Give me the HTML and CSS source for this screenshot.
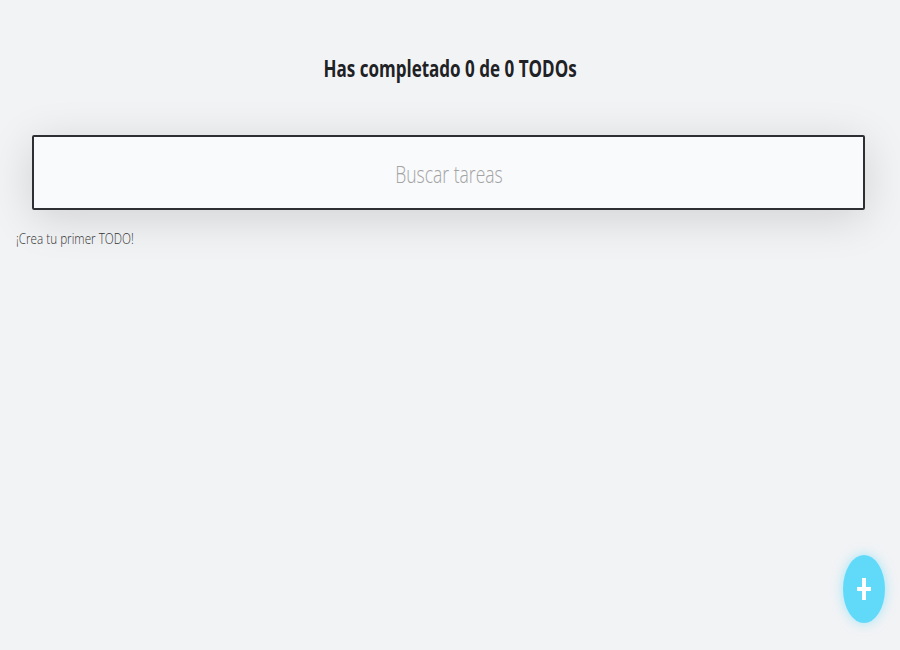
FILE: index.html
```html
<!DOCTYPE html>
<html lang="es">
<head>
<meta charset="utf-8">
<title>TODOs</title>
<link rel="stylesheet" href="styles.css">
</head>
<body>
<header class="counter">
  <h1 class="counter-title">Has completado 0 de 0 TODOs</h1>
</header>
<div class="search">
  <input class="search-input" type="text" placeholder="Buscar tareas">
  <span class="search-placeholder">Buscar tareas</span>
</div>
<p class="empty"><span class="empty-text">¡Crea tu primer TODO!</span></p>
<button class="create-btn" type="button" aria-label="Crear TODO">
  <svg class="create-icon" viewBox="0 0 14 22" width="14" height="22">
    <rect x="5" y="0" width="4" height="22" fill="#fff"/>
    <rect x="0" y="9" width="14" height="4" fill="#fff"/>
  </svg>
</button>
</body>
</html>
```
FILE: styles.css
```css
* { box-sizing: border-box; }
html, body { height: 100%; }
body {
  margin: 0;
  background: #f2f3f5;
  font-family: "Open Sans", "Noto Sans", sans-serif;
  color: #1f1f1f;
}
.counter {
  display: flex;
  justify-content: center;
  padding-top: 52px;
}
.counter-title {
  margin: 0;
  font-size: 23px;
  font-weight: 700;
  line-height: 32px;
  color: #202124;
  display: inline-block;
  transform: scaleX(0.74);
  white-space: nowrap;
}
.search {
  position: relative;
  margin: 51px 35px 0 32px;
  height: 75px;
  box-shadow: 0 8px 45px rgba(0,0,0,0.14);
}
.search-input {
  width: 100%;
  height: 100%;
  border: 2px solid #2e2f33;
  border-radius: 2px;
  background: #f9fafc;
  font: inherit;
  outline: none;
}
.search-input::placeholder { color: transparent; }
.search-placeholder {
  position: absolute;
  left: 50%;
  top: 50%;
  transform: translate(-50%, -50%) scaleX(0.73);
  font-family: "Open Sans", sans-serif;
  font-weight: 300;
  font-size: 24px;
  color: #a3a3a3;
  pointer-events: none;
  white-space: nowrap;
}
.empty {
  margin: 18px 0 0 16px;
  line-height: 20px;
}
.empty-text {
  display: inline-block;
  transform: scaleX(0.78);
  transform-origin: left center;
  font-size: 15px;
  font-weight: 300;
  color: #333;
  white-space: nowrap;
}
.create-btn {
  position: fixed;
  right: 15px;
  bottom: 27px;
  width: 42px;
  height: 68px;
  border: none;
  border-radius: 50%;
  background: #61dafa;
  box-shadow: 0 0 12px rgba(97,218,250,0.55);
  display: flex;
  align-items: center;
  justify-content: center;
  padding: 0;
}
.create-icon { display: block; }
```
